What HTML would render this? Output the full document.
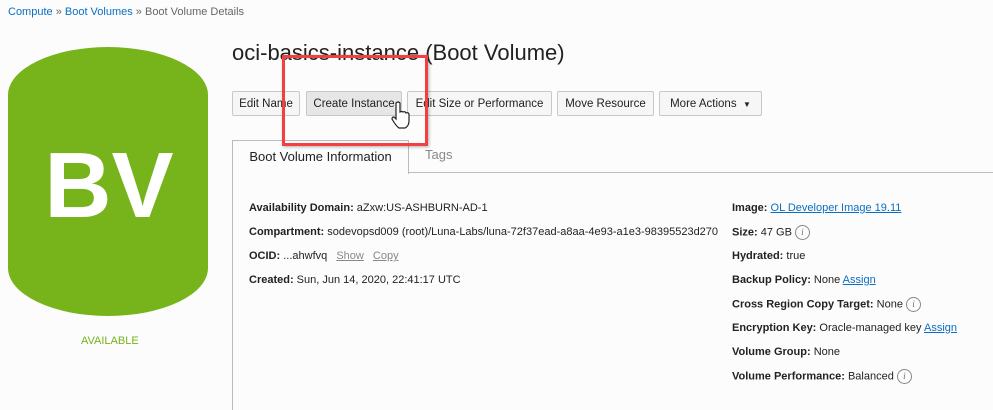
<!DOCTYPE html>
<html><head><meta charset="utf-8"><style>
body{margin:0;width:993px;height:409px;background:#fcfcfc;font-family:"Liberation Sans",sans-serif;position:relative;overflow:hidden;color:#222}
.a{position:absolute;white-space:nowrap}
.bc{left:8px;top:6px;font-size:11px;color:#666}
.bc a{color:#0a6fc2;text-decoration:none}
.btn{position:absolute;top:91px;height:25px;border:1px solid #c8c8c8;border-radius:2px;background:#f6f6f6;font-size:11.5px;line-height:25px;text-align:center;color:#222;box-sizing:border-box}
.row{position:absolute;font-size:11px;color:#222;white-space:nowrap}
.row b{font-weight:bold}
.lk{color:#0a6fc2;text-decoration:underline}
.gl{color:#888;text-decoration:underline;margin-left:6px}
.i{display:inline-block;width:13px;height:13px;border:1px solid #888;border-radius:50%;font-size:9px;line-height:13px;text-align:center;font-style:italic;font-family:"Liberation Serif",serif;color:#666;vertical-align:middle;margin-left:3px}
</style></head><body>
<div class="a bc"><a>Compute</a> » <a>Boot Volumes</a> » Boot Volume Details</div>
<svg class="a" style="left:0;top:0" width="220" height="330"><path d="M8,95 A100,48 0 0 1 208,95 V268 A100,48 0 0 1 8,268 Z" fill="#77b31b"/>
<text x="109" y="217" text-anchor="middle" font-family="Liberation Sans" font-weight="bold" font-size="93" fill="#fff">BV</text></svg>
<div class="a" style="left:81px;top:335px;font-size:11px;color:#77b31b">AVAILABLE</div>
<div class="a" style="left:232px;top:40px;font-size:22px;color:#222">oci-basics-instance (Boot Volume)</div>
<div class="btn" style="left:232px;width:68px">Edit Name</div>
<div class="btn" style="left:306px;width:96px;background:#e6e6e6">Create Instance</div>
<div class="btn" style="left:407px;width:145px">Edit Size or Performance</div>
<div class="btn" style="left:557px;width:97px">Move Resource</div>
<div class="btn" style="left:659px;width:103px">More Actions &nbsp;<span style="font-size:8px">▼</span></div>
<div class="a" style="left:232px;top:172px;width:761px;height:237px;border-left:1px solid #bbb;border-top:1px solid #bbb"></div>
<div class="a" style="left:232px;top:140px;width:175px;height:33px;border:1px solid #bbb;border-bottom:none;background:#fcfcfc;font-size:13px;line-height:32px;text-align:center">Boot Volume Information</div>
<div class="a" style="left:425px;top:147px;font-size:13px;color:#888">Tags</div>
<div class="row" style="left:249px;top:202px"><b>Availability Domain:</b> aZxw:US-ASHBURN-AD-1</div>
<div class="row" style="left:249px;top:226px"><b>Compartment:</b> sodevopsd009 (root)/Luna-Labs/luna-72f37ead-a8aa-4e93-a1e3-98395523d270</div>
<div class="row" style="left:249px;top:250px"><b>OCID:</b> ...ahwfvq <span class="gl">Show</span> <span class="gl">Copy</span></div>
<div class="row" style="left:249px;top:274px"><b>Created:</b> Sun, Jun 14, 2020, 22:41:17 UTC</div>
<div class="row" style="left:732px;top:202px"><b>Image:</b> <span class="lk">OL Developer Image 19.11</span></div>
<div class="row" style="left:732px;top:225px"><b>Size:</b> 47 GB<span class="i">i</span></div>
<div class="row" style="left:732px;top:250px"><b>Hydrated:</b> true</div>
<div class="row" style="left:732px;top:274px"><b>Backup Policy:</b> None <span class="lk">Assign</span></div>
<div class="row" style="left:732px;top:297px"><b>Cross Region Copy Target:</b> None<span class="i">i</span></div>
<div class="row" style="left:732px;top:322px"><b>Encryption Key:</b> Oracle-managed key <span class="lk">Assign</span></div>
<div class="row" style="left:732px;top:346px"><b>Volume Group:</b> None</div>
<div class="row" style="left:732px;top:369px"><b>Volume Performance:</b> Balanced<span class="i">i</span></div>
<div class="a" style="left:282px;top:55px;width:140px;height:85px;border:3px solid #f0403f;box-shadow:1px 1px 3px rgba(0,0,0,.3)"></div>
<svg class="a" style="left:390px;top:100px" width="22" height="30"><path d="M6,3 q2,-2 4,0 v9 q2,-1 3,0 q2,-1 3,1 q2,-1 3,1 v7 q0,5 -4,7 h-6 q-3,-2 -7,-9 q0,-2 2,-2 l2,2 z" fill="#fff" stroke="#222" stroke-width="1.2"/></svg>
</body></html>
